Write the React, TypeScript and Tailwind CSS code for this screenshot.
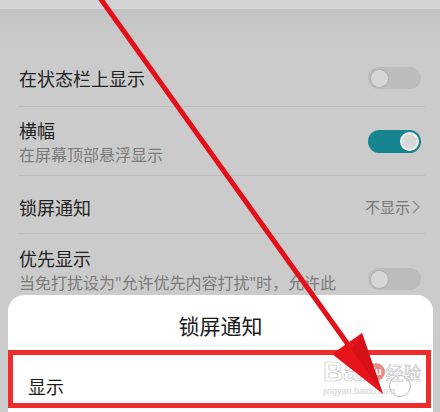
import React from "react";

const font = { fontFamily: '"Noto Sans CJK SC", "Noto Sans", sans-serif' };
const latin = { fontFamily: '"Noto Sans", "Noto Sans CJK SC", sans-serif' };

function Toggle({ on }: { on?: boolean }) {
  if (on) {
    return (
      <div className="w-[53px] h-[23px] rounded-full bg-[#16858f] flex items-center justify-end pr-[2px]">
        <div className="w-[19px] h-[19px] rounded-full bg-[#d9d9d9] border-[2px] border-[#f2f2f2]" />
      </div>
    );
  }
  return (
    <div className="w-[53px] h-[22px] rounded-full bg-[#bcbcbc] flex items-center pl-[2px]">
      <div className="w-[19px] h-[19px] rounded-full bg-[#d6d6d6] border border-[#b0b0b0]" />
    </div>
  );
}

function Divider() {
  return <div className="ml-[18px] mr-[15px] h-px bg-[#bdbdbd]" />;
}

export default function App() {
  return (
    <div className="relative w-[440px] h-[412px] overflow-hidden bg-[#cbcbcb]" style={font}>
      {/* top band */}
      <div className="h-[52px] flex flex-col">
        <div className="h-[9px] bg-[#d3d3d3]" />
        <div className="flex-1 bg-gradient-to-b from-[#c4c4c4] to-[#cbcbcb]" />
      </div>

      {/* row 1 */}
      <div className="h-[54px] flex items-center justify-between pl-[19px] pr-[19px] pb-[2px]">
        <span className="text-[18px] leading-[24px] text-[#222]">在状态栏上显示</span>
        <Toggle />
      </div>
      <Divider />

      {/* row 2 */}
      <div className="h-[68px] flex items-center justify-between pl-[19px] pr-[19px]">
        <div className="flex flex-col pt-[2px]">
          <span className="text-[18px] leading-[24px] text-[#222]">横幅</span>
          <span className="text-[16px] leading-[24px] text-[#7a7a7a]">在屏幕顶部悬浮显示</span>
        </div>
        <Toggle on />
      </div>
      <Divider />

      {/* row 3 */}
      <div className="h-[57px] flex items-center justify-between pl-[19px] pr-[19px] pt-[5px]">
        <span className="text-[18px] leading-[24px] text-[#222]">锁屏通知</span>
        <span className="flex items-center text-[15px] leading-[22px] text-[#777]">
          不显示
          <svg width="10" height="16" viewBox="0 0 10 16" className="ml-[1px]">
            <path d="M2 2 L8 8 L2 14" fill="none" stroke="#8a8a8a" strokeWidth="1.3" />
          </svg>
        </span>
      </div>
      <Divider />

      {/* row 4 */}
      <div className="flex items-start justify-between pl-[19px] pr-[19px] pt-[12px]">
        <div className="flex flex-col">
          <span className="text-[18px] leading-[24px] text-[#222]">优先显示</span>
          <span className="text-[16px] leading-[24px] text-[#7a7a7a] whitespace-nowrap">
            当免打扰设为<span style={latin}>"</span>允许优先内容打扰<span style={latin}>"</span>时，允许此
          </span>
        </div>
        <div className="mt-[22px]">
          <Toggle />
        </div>
      </div>

      {/* bottom sheet */}
      <div className="absolute left-[8px] right-[7px] top-[295px] bottom-0 rounded-t-[16px] bg-white">
        <div className="pt-[18px] text-center text-[21px] leading-[24px] text-[#1a1a1a]">锁屏通知</div>
        <div className="mt-[13px] h-[58px] flex items-center justify-between pl-[20px] pr-[22px] pt-[14px]">
          <span className="text-[18px] leading-[24px] text-[#1a1a1a]">显示</span>
          <div className="w-[22px] h-[22px] rounded-full border border-[#bdbdbd]" />
        </div>
      </div>

      {/* red highlight box */}
      <div className="absolute left-[8px] top-[350px] w-[423px] h-[58px] border-[5px] border-[#ef2b2b]" />

      {/* watermark */}
      <div className="absolute left-[323px] top-[358px] flex flex-col items-start pointer-events-none">
        <div className="flex items-center">
          <span
            className="text-[28px] leading-[28px] font-bold text-white/75"
            style={{ fontFamily: '"Liberation Sans", sans-serif', WebkitTextStroke: "0.7px #c4c4c4" }}
          >
            Bai
          </span>
          <span
            className="w-[18px] h-[18px] rounded-full bg-[#e05a5a]/70 text-white text-[10px] leading-[18px] text-center font-bold"
            style={{ fontFamily: '"Liberation Sans", sans-serif' }}
          >
            du
          </span>
          <span className="ml-[1px] text-[18px] leading-[24px] text-white/75" style={{ WebkitTextStroke: "0.6px #c4c4c4" }}>
            经验
          </span>
        </div>
        <span className="text-[9px] leading-[11px] text-[#d0d0d0]" style={{ fontFamily: '"Liberation Sans", sans-serif' }}>
          jingyan.baidu.com
        </span>
      </div>

      {/* red arrow */}
      <svg className="absolute inset-0 pointer-events-none" width="440" height="412" viewBox="0 0 440 412">
        <line x1="100" y1="-2" x2="352" y2="350" stroke="#e3101a" strokeWidth="5" />
        <polygon points="362,333 332,354 383,394" fill="#e8141c" />
        <polygon points="362,333 352,350 383,394" fill="#c90d15" opacity="0.6" />
      </svg>
    </div>
  );
}
